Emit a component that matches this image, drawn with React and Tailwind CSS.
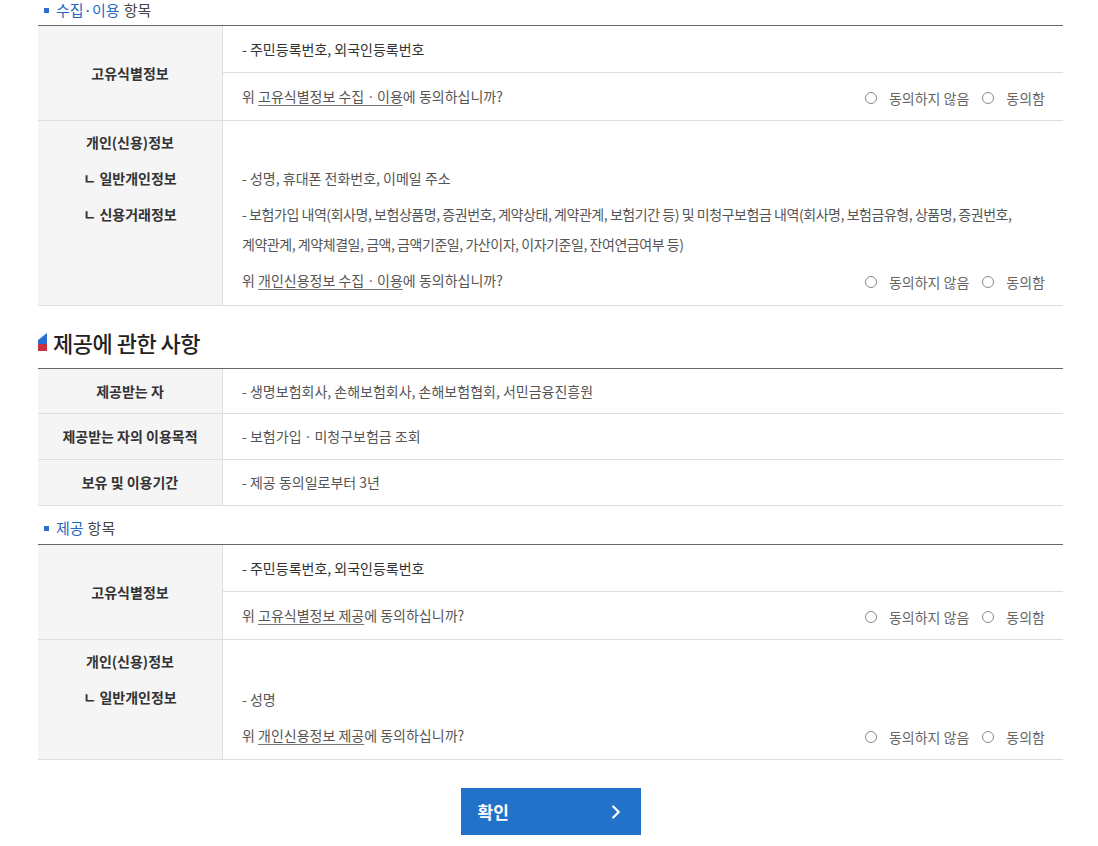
import React from "react";
import { ChevronRight } from "lucide-react";

function Radios({ className = "" }) {
  return (
    <div className={"flex items-center text-[14px] leading-[20px] text-[#666] " + className}>
      <span className="w-[12px] h-[12px] rounded-full border border-[#8a8a8a] bg-white"></span>
      <span className="ml-[12px]">동의하지 않음</span>
      <span className="ml-[13px] w-[12px] h-[12px] rounded-full border border-[#8a8a8a] bg-white"></span>
      <span className="ml-[12px]">동의함</span>
    </div>
  );
}

function SubHeading({ blue, rest, className = "" }) {
  return (
    <div className={"flex items-center h-[20px] pl-[6px] text-[15px] leading-[20px] " + className}>
      <span className="w-[5px] h-[5px] bg-[#2b6fcf]"></span>
      <span className="ml-[7px] text-[#1f68c4]">{blue}</span>
      <span className="ml-[4px] text-[#444]">{rest}</span>
    </div>
  );
}

function Question({ pre, link, post }) {
  return (
    <span className="text-[#555]">
      {pre}
      <span className="underline underline-offset-[3px] decoration-[#777]">{link}</span>
      {post}
    </span>
  );
}

function IdRow({ question }) {
  return (
    <div className="grid grid-cols-[185px_1fr] border-b border-[#ddd]">
      <div className="bg-[#f5f5f5] border-r border-[#ddd] flex items-center justify-center font-bold text-[#333]">
        고유식별정보
      </div>
      <div>
        <div className="h-[47px] flex items-center pl-[19px] border-b border-[#ddd] text-[#333]">
          - 주민등록번호, 외국인등록번호
        </div>
        <div className="h-[47px] flex items-center justify-between pl-[19px] pr-[18px]">
          {question}
          <Radios className="mt-[3px]" />
        </div>
      </div>
    </div>
  );
}

export default function App() {
  return (
    <div className="w-[1098px] h-[846px] bg-white font-['Noto_Sans_CJK_KR','Malgun_Gothic',sans-serif] text-[14px] text-[#555] overflow-hidden">
      <div className="ml-[38px] w-[1025px]">
        <SubHeading blue="수집·이용" rest="항목" />

        <div className="mt-[5px] border-t border-[#666]">
          <IdRow
            question={<Question pre="위 " link="고유식별정보 수집ㆍ이용" post="에 동의하십니까?" />}
          />
          <div className="grid grid-cols-[185px_1fr] border-b border-[#ddd]">
            <div className="bg-[#f5f5f5] border-r border-[#ddd] flex flex-col items-center gap-[6px] pt-[6px] font-bold text-[#333] leading-[30px]">
              <div>개인(신용)정보</div>
              <div>ㄴ 일반개인정보</div>
              <div>ㄴ 신용거래정보</div>
            </div>
            <div className="flex flex-col gap-[6px] pt-[6px] pb-[10px] pl-[19px] pr-[18px] leading-[30px] break-keep">
              <div className="h-[30px]"></div>
              <div>- 성명, 휴대폰 전화번호, 이메일 주소</div>
              <div className="tracking-[-0.45px]">
                - 보험가입 내역(회사명, 보험상품명, 증권번호, 계약상태, 계약관계, 보험기간 등) 및 미청구보험금 내역(회사명, 보험금유형, 상품명, 증권번호, 계약관계, 계약체결일, 금액, 금액기준일, 가산이자, 이자기준일, 잔여연금여부 등)
              </div>
              <div className="flex items-center justify-between">
                <Question pre="위 " link="개인신용정보 수집ㆍ이용" post="에 동의하십니까?" />
                <Radios className="mt-[3px]" />
              </div>
            </div>
          </div>
        </div>

        <div className="mt-[22px] h-[28px] flex items-center">
          <svg width="9" height="18" viewBox="0 0 9 18" className="shrink-0">
            <polygon points="0,7 9,0 9,11 0,11" fill="#2a6fd0" />
            <rect x="0" y="11" width="9" height="7" fill="#c8323f" />
          </svg>
          <span className="ml-[6px] text-[22px] font-medium text-[#222] tracking-[-0.5px]">제공에 관한 사항</span>
        </div>

        <div className="mt-[12px] border-t border-[#666]">
          {[
            ["제공받는 자", "- 생명보험회사, 손해보험회사, 손해보험협회, 서민금융진흥원", "h-[45px]"],
            ["제공받는 자의 이용목적", "- 보험가입ㆍ미청구보험금 조회", "h-[46px]"],
            ["보유 및 이용기간", "- 제공 동의일로부터 3년", "h-[46px]"],
          ].map(([k, v, h]) => (
            <div key={k} className={"grid grid-cols-[185px_1fr] border-b border-[#ddd] " + h}>
              <div className="bg-[#f5f5f5] border-r border-[#ddd] flex items-center justify-center font-bold text-[#333]">
                {k}
              </div>
              <div className="flex items-center pl-[19px]">{v}</div>
            </div>
          ))}
        </div>

        <SubHeading blue="제공" rest="항목" className="mt-[12px]" />

        <div className="mt-[6px] border-t border-[#666]">
          <IdRow question={<Question pre="위 " link="고유식별정보 제공" post="에 동의하십니까?" />} />
          <div className="grid grid-cols-[185px_1fr] border-b border-[#ddd]">
            <div className="bg-[#f5f5f5] border-r border-[#ddd] flex flex-col items-center gap-[6px] pt-[6px] font-bold text-[#333] leading-[30px]">
              <div>개인(신용)정보</div>
              <div>ㄴ 일반개인정보</div>
            </div>
            <div className="flex flex-col gap-[6px] pt-[6px] pb-[9px] pl-[19px] pr-[18px] leading-[30px]">
              <div className="h-[30px]"></div>
              <div className="mt-[2px]">- 성명</div>
              <div className="flex items-center justify-between">
                <Question pre="위 " link="개인신용정보 제공" post="에 동의하십니까?" />
                <Radios className="mt-[3px]" />
              </div>
            </div>
          </div>
        </div>

        <div className="mt-[28px] flex justify-center">
          <button className="w-[180px] h-[47px] bg-[#2372c9] flex items-center justify-between pl-[17px] pr-[14px] text-white text-[17px] font-bold">
            <span>확인</span>
            <ChevronRight size={22} strokeWidth={2.5} />
          </button>
        </div>
      </div>
    </div>
  );
}
